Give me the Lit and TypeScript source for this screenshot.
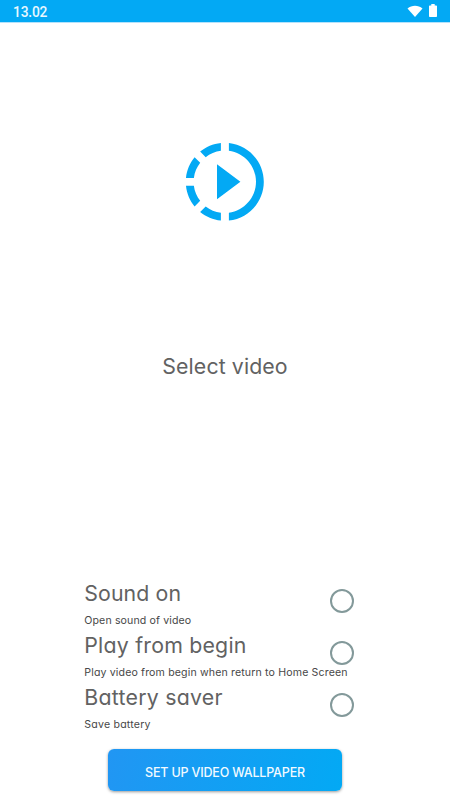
import { LitElement, html, css } from "lit";
import { customElement, property } from "lit/decorators.js";

@customElement("status-bar")
class StatusBar extends LitElement {
  static styles = css`
    :host { display: flex; align-items: center; justify-content: space-between; height: 23px; padding: 0 13px; background: #03a9f4; border-bottom: 1px solid #b4e2fb; box-sizing: border-box; color: #e8f8ff; font: 500 13.8px/22px Roboto, sans-serif; }
    .time { padding-top: 2px; letter-spacing: -0.2px; }
    .icons { display: flex; align-items: center; gap: 6px; padding-bottom: 1px; }
    svg { display: block; fill: #fff; }
  `;
  render() {
    return html`<span class="time">13.02</span>
      <span class="icons">
        <svg width="16" height="12" viewBox="0 0 16 12"><path d="M0.5 3.4C4.8-0.2 11.2-0.2 15.5 3.4L8 12Z" /></svg>
        <svg width="8" height="13" viewBox="0 0 8 13"><path d="M2.3 0h3.4v1.4h1.5q.8 0 .8.8v10q0 .8-.8.8H.8q-.8 0-.8-.8v-10q0-.8.8-.8h1.5z" /></svg>
      </span>`;
  }
}

@customElement("option-row")
class OptionRow extends LitElement {
  @property() heading = "";
  @property() detail = "";
  static styles = css`
    :host { display: grid; grid-template-columns: 245.3px 24px; height: 52px; color: #626262; }
    .text { white-space: nowrap; }
    .heading { font-size: 21.3px; line-height: 32px; letter-spacing: var(--heading-spacing, 0); }
    .detail { font-size: 10.6px; line-height: 24px; color: #484848; letter-spacing: var(--detail-spacing, 0); }
    .radio { box-sizing: border-box; width: 24px; height: 24px; margin-top: 12.4px; border: 2px solid #83999a; border-radius: 50%; }
  `;
  render() {
    return html`<div class="text">
        <div class="heading">${this.heading}</div>
        <div class="detail">${this.detail}</div>
      </div>
      <span class="radio"></span>`;
  }
}

@customElement("app-root")
class AppRoot extends LitElement {
  static styles = css`
    :host { display: flex; flex-direction: column; align-items: center; height: 800px; overflow: hidden; background: #fff; font-family: Inter, sans-serif; font-feature-settings: "cv11" 1; }
    status-bar { align-self: stretch; }
    .icon { display: block; width: 93.6px; height: 93.6px; margin-top: 112px; fill: #03a9f4; flex: none; }
    .select { margin-top: 121.4px; font-size: 21.3px; line-height: 32px; letter-spacing: 0.1px; color: #626262; }
    .options { width: 282px; box-sizing: border-box; padding-left: 0.3px; margin-top: 195px; }
    .setup { width: 234px; height: 42px; margin-top: 16px; padding: 6px 0 0; border: 0; border-radius: 6px; background: linear-gradient(100deg, #2196f3, #03a9f4); box-shadow: 0 1px 3px #0006; color: #f2faff; font: 500 12.5px/36px Inter, sans-serif; letter-spacing: -0.18px; white-space: nowrap; }
    .sound { --heading-spacing: 0.1px; --detail-spacing: 0.12px; }
    .begin { --heading-spacing: 0.22px; --detail-spacing: 0.14px; }
    .saver { --heading-spacing: 0.25px; --detail-spacing: 0.2px; }
  `;
  render() {
    return html`<status-bar></status-bar>
      <svg class="icon" viewBox="0 0 24 24"><path d="M10 7.5v9L16 12zM11 4.07V2.05c-2.01.2-3.84 1-5.32 2.21L7.1 5.69c1.11-.86 2.44-1.44 3.9-1.62zM5.69 7.1L4.26 5.68C3.05 7.16 2.25 8.99 2.05 11h2.02c.18-1.46.76-2.79 1.62-3.9zM4.07 13H2.05c.2 2.01 1 3.84 2.21 5.32l1.43-1.43c-.86-1.1-1.44-2.43-1.62-3.89zm1.61 6.74C7.16 20.95 9 21.75 11 21.95v-2.02c-1.46-.18-2.79-.76-3.9-1.62zM22 12c0 5.16-3.92 9.42-8.95 9.95v-2.02C16.97 19.41 20 16.05 20 12s-3.03-7.41-6.95-7.93V2.05C18.08 2.58 22 6.84 22 12z" /></svg>
      <div class="select">Select video</div>
      <div class="options">
        <option-row class="sound" heading="Sound on" detail="Open sound of video"></option-row>
        <option-row class="begin" heading="Play from begin" detail="Play video from begin when return to Home Screen"></option-row>
        <option-row class="saver" heading="Battery saver" detail="Save battery"></option-row>
      </div>
      <button class="setup">SET UP VIDEO WALLPAPER</button>`;
  }
}
